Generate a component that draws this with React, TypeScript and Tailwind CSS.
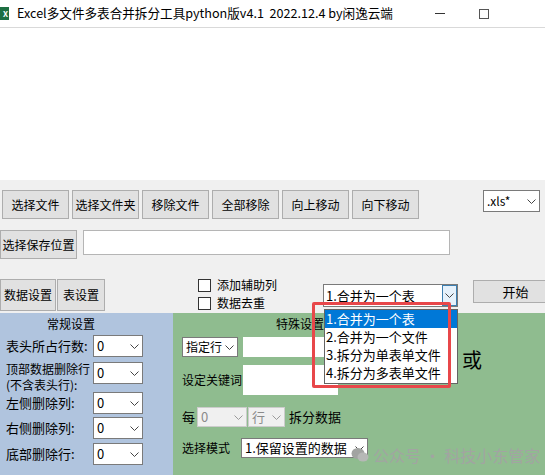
import clsx from "clsx";

const Chevron = ({ color = "#444" }: { color?: string }) => (
  <svg width="9" height="5" viewBox="0 0 9 5">
    <polyline points="0.5,0.5 4.5,4.5 8.5,0.5" fill="none" stroke={color} strokeWidth="1" />
  </svg>
);

const Btn = ({ label, className }: { label: string; className?: string }) => (
  <div
    className={clsx(
      "flex shrink-0 items-center justify-center border border-[#adadad] bg-[#e1e1e1] text-[12px]",
      className
    )}
  >
    {label}
  </div>
);

const Combo = ({
  text,
  className,
  dim,
  textClass,
}: {
  text: string;
  className?: string;
  dim?: boolean;
  textClass?: string;
}) => (
  <div
    className={clsx(
      "flex shrink-0 items-center border",
      dim ? "border-[#cccccc] bg-[#f0f0f0] text-[#8a8a8a]" : "border-[#7a7a7a] bg-white",
      className
    )}
  >
    <span className={clsx("flex-1 overflow-hidden whitespace-nowrap pl-[3px]", textClass ?? "text-[13px]")}>
      {text}
    </span>
    <span className="flex w-[14px] shrink-0 justify-center pr-[2px]">
      <Chevron color={dim ? "#9a9a9a" : "#444"} />
    </span>
  </div>
);

const Check = ({ label }: { label: string }) => (
  <div className="flex h-[14px] items-center gap-[6px] text-[12px]">
    <span className="h-[13px] w-[13px] border border-[#333] bg-white" />
    <span>{label}</span>
  </div>
);

export default function App() {
  return (
    <div className="relative h-[475px] w-[545px] overflow-hidden bg-[#f0f0f0] font-['Noto_Sans_CJK_SC','Noto_Sans',sans-serif] text-black">
      {/* title bar */}
      <div className="flex h-[28px] items-center border-b border-[#d9d9d9] bg-white">
        <div className="flex h-[13px] w-[9px] shrink-0 items-center justify-end bg-[#1d6f42] pr-[1px] text-[8px] font-bold leading-none text-white">
          X
        </div>
        <span className="ml-[8px] whitespace-nowrap text-[12.6px]">
          Excel多文件多表合并拆分工具python版v4.1&nbsp;&nbsp;2022.12.4 by闲逸云端
        </span>
        <span className="ml-auto h-px w-[10px] shrink-0 bg-[#333]" />
        <span className="ml-[34px] mr-[56px] h-[10px] w-[10px] shrink-0 border border-[#555]" />
      </div>

      {/* file list */}
      <div className="h-[152px] bg-white" />

      {/* buttons row */}
      <div className="mt-[10px] flex items-start gap-[3px] pl-[2px]">
        <Btn label="选择文件" className="h-[29px] w-[67px]" />
        <Btn label="选择文件夹" className="h-[29px] w-[67px]" />
        <Btn label="移除文件" className="h-[29px] w-[67px]" />
        <Btn label="全部移除" className="h-[29px] w-[67px]" />
        <Btn label="向上移动" className="h-[29px] w-[67px]" />
        <Btn label="向下移动" className="h-[29px] w-[67px]" />
        <Combo text=".xls*" textClass="text-[12px]" className="ml-auto mr-[5px] h-[22px] w-[57px]" />
      </div>

      {/* save row */}
      <div className="mt-[11px] flex items-start">
        <Btn label="选择保存位置" className="h-[29px] w-[77px]" />
        <div className="ml-[6px] h-[25px] w-[367px] border border-[#b5b5b5] bg-white" />
      </div>

      {/* settings row */}
      <div className="mt-[19px] flex h-[35px] items-start">
        <Btn label="数据设置" className="mt-px h-[32px] w-[56px]" />
        <Btn label="表设置" className="ml-[1px] mt-px h-[32px] w-[48px]" />
        <div className="ml-[93px] flex w-[125px] shrink-0 flex-col gap-[4px]">
          <Check label="添加辅助列" />
          <Check label="数据去重" />
        </div>
        <div className="mt-[6px] flex h-[23px] w-[135px] shrink-0 items-center border border-[#7a7a7a] bg-white">
          <span className="flex-1 pl-[2px] text-[13px]">1.合并为一个表</span>
          <span className="flex h-full w-[15px] items-center justify-center border border-[#3c7fb1] bg-[#e5f1fb]">
            <Chevron />
          </span>
        </div>
        <Btn label="开始" className="ml-[15px] mt-[2px] h-[23px] w-[85px] text-[13px]" />
      </div>

      {/* panels */}
      <div className="flex h-[162px]">
        <div className="w-[173px] shrink-0 bg-[#b0c4de] text-[13px]">
          <div className="flex h-[22px] items-center pl-[47px] text-[12px]">常规设置</div>
          <div className="flex h-[22px] items-center">
            <span className="w-[93px] whitespace-nowrap pl-[6px]">表头所占行数:</span>
            <Combo text="0" className="h-[22px] w-[50px]" />
          </div>
          <div className="mt-[5px] flex h-[30px] items-start">
            <div className="-mt-px w-[93px] whitespace-nowrap pl-[6px] text-[12px] leading-[16px]">
              <div>顶部数据删除行</div>
              <div>(不含表头行):</div>
            </div>
            <Combo text="0" className="h-[22px] w-[50px]" />
          </div>
          <div className="flex h-[22px] items-center">
            <span className="w-[93px] whitespace-nowrap pl-[6px]">左侧删除列:</span>
            <Combo text="0" className="h-[22px] w-[50px]" />
          </div>
          <div className="mt-[3px] flex h-[22px] items-center">
            <span className="w-[93px] whitespace-nowrap pl-[6px]">右侧删除列:</span>
            <Combo text="0" className="h-[22px] w-[50px]" />
          </div>
          <div className="mt-[4px] flex h-[22px] items-center">
            <span className="w-[93px] whitespace-nowrap pl-[6px]">底部删除行:</span>
            <Combo text="0" className="h-[22px] w-[50px]" />
          </div>
        </div>

        <div className="flex flex-1 bg-[#8fbc8f] text-[12px]">
          <div className="w-[200px] shrink-0">
            <div className="flex h-[22px] items-center whitespace-nowrap pl-[103px]">特殊设置(可选)</div>
            <div className="mt-[2px] flex h-[20px] items-center pl-[9px]">
              <Combo text="指定行" textClass="text-[12px]" className="h-[20px] w-[56px]" />
              <div className="ml-[5px] h-[20px] w-[95px] bg-white" />
            </div>
            <div className="mt-[8px] flex h-[30px] items-center">
              <span className="w-[70px] pl-[9px]">设定关键词</span>
              <div className="h-[30px] w-[95px] bg-white" />
            </div>
            <div className="mt-[12px] flex h-[20px] items-center pl-[9px]">
              <span className="text-[13px]">每</span>
              <Combo text="0" dim className="ml-[2px] h-[20px] w-[50px]" />
              <Combo text="行" dim className="ml-[1px] h-[20px] w-[37px]" />
              <span className="ml-[4px] whitespace-nowrap text-[13px]">拆分数据</span>
            </div>
            <div className="mt-[11px] flex h-[20px] items-center">
              <span className="w-[68px] pl-[9px]">选择模式</span>
              <Combo text="1.保留设置的数据" className="h-[20px] w-[127px]" />
            </div>
          </div>
          <div className="ml-[89px] mt-[37px] text-[20px] leading-none">或</div>
        </div>
      </div>

      {/* open dropdown list */}
      <div className="absolute left-[324px] top-[309px] h-[75px] w-[134px] border border-[#646464] bg-white text-[13px]">
        <div className="h-[18px] bg-[#0078d7] pl-[1px] leading-[18px] text-white">1.合并为一个表</div>
        <div className="h-[18px] pl-[1px] leading-[18px]">2.合并为一个文件</div>
        <div className="h-[18px] pl-[1px] leading-[18px]">3.拆分为单表单文件</div>
        <div className="h-[18px] pl-[1px] leading-[18px]">4.拆分为多表单文件</div>
      </div>

      {/* annotation box */}
      <div className="absolute left-[312px] top-[302px] h-[86px] w-[139px] rounded-[2px] border-[3px] border-[#e8474a]" />

      {/* watermark */}
      <div className="absolute left-[351px] top-[443px] flex items-center gap-[4px] text-[16px] text-[#a2a4a2]">
        <svg width="18" height="16" viewBox="0 0 18 16">
          <ellipse cx="7" cy="6.5" rx="6.5" ry="5.5" fill="#a2a4a2" />
          <ellipse cx="12" cy="10" rx="5.5" ry="4.5" fill="#b6b8b6" />
        </svg>
        <span>公众号 · 科技小东管家</span>
      </div>
    </div>
  );
}
